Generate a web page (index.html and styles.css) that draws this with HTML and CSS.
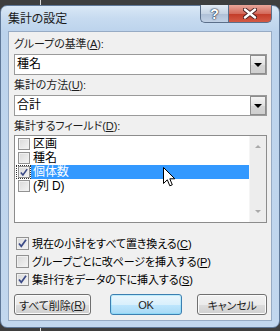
FILE: index.html
```html
<!DOCTYPE html>
<html lang="ja">

<head>
    <meta charset="UTF-8">
    <title>集計の設定</title>
    <link rel="stylesheet" href="styles.css">
</head>

<body>
    <div class="window">
        <div class="titlebar">
            <span class="title">集計の設定</span>
            <div class="caption-buttons">
                <span class="cap-btn help">?</span>
                <span class="cap-btn close">
                    <svg width="14" height="11" viewBox="0 0 14 11">
                        <path d="M2 1.5 L12 9.5 M12 1.5 L2 9.5" stroke="#4a2020" stroke-width="4.2" stroke-linecap="round" />
                        <path d="M2 1.5 L12 9.5 M12 1.5 L2 9.5" stroke="#fff" stroke-width="2.4" stroke-linecap="round" />
                    </svg>
                </span>
            </div>
        </div>

        <div class="client">
            <div class="label">グループの基準(<u>A</u>):</div>
            <div class="combo">
                <span class="combo-text">種名</span>
                <span class="combo-btn"><span class="arrow"></span></span>
            </div>

            <div class="label">集計の方法(<u>U</u>):</div>
            <div class="combo">
                <span class="combo-text">合計</span>
                <span class="combo-btn"><span class="arrow"></span></span>
            </div>

            <div class="label">集計するフィールド(<u>D</u>):</div>
            <div class="listbox">
                <div class="items">
                    <div class="item">
                        <span class="cb-wrap"><span class="cb"></span></span>
                        <span class="item-text">区画</span>
                    </div>
                    <div class="item">
                        <span class="cb-wrap"><span class="cb"></span></span>
                        <span class="item-text">種名</span>
                    </div>
                    <div class="item selected">
                        <span class="cb-wrap focus"><span class="cb checked">
                            <svg width="11" height="11" viewBox="0 0 11 11"><path d="M2 5.5 L4.3 8.3 L9 1.8" fill="none" stroke="#3b4a86" stroke-width="1.7" /></svg>
                        </span></span>
                        <span class="item-text">個体数</span>
                    </div>
                    <div class="item">
                        <span class="cb-wrap"><span class="cb"></span></span>
                        <span class="item-text">(列 D)</span>
                    </div>
                </div>
                <div class="scrollbar">
                    <span class="sb-arrow up"></span>
                    <span class="sb-arrow down"></span>
                </div>
                <svg class="cursor" width="14" height="22" viewBox="0 0 14 22">
                    <path d="M0.5 0.5 L0.5 16.5 L4.3 12.8 L6.8 18.8 L9.3 17.8 L6.8 11.8 L11.8 11.8 Z" fill="#fff" stroke="#000" stroke-width="1" stroke-linejoin="round" />
                </svg>
            </div>

            <div class="options">
                <div class="option">
                    <span class="cb checked">
                        <svg width="11" height="11" viewBox="0 0 11 11"><path d="M2 5.5 L4.3 8.3 L9 1.8" fill="none" stroke="#3b4a86" stroke-width="1.7" /></svg>
                    </span>
                    <span>現在の小計をすべて置き換える(<u>C</u>)</span>
                </div>
                <div class="option">
                    <span class="cb"></span>
                    <span>グループごとに改ページを挿入する(<u>P</u>)</span>
                </div>
                <div class="option">
                    <span class="cb checked">
                        <svg width="11" height="11" viewBox="0 0 11 11"><path d="M2 5.5 L4.3 8.3 L9 1.8" fill="none" stroke="#3b4a86" stroke-width="1.7" /></svg>
                    </span>
                    <span>集計行をデータの下に挿入する(<u>S</u>)</span>
                </div>
            </div>

            <div class="buttons">
                <span class="btn btn-clear">すべて削除(<u>R</u>)</span>
                <span class="btn btn-ok">OK</span>
                <span class="btn btn-cancel">キャンセル</span>
            </div>
        </div>
    </div>
</body>

</html>
```

FILE: styles.css
```css
body {
    margin: 0;
    padding-top: 5px;
    height: 331px;
    box-sizing: border-box;
    overflow: hidden;
    background-color: #3e3e3e;
    background-image: linear-gradient(90deg, transparent 40px, #d8d8d8 40px, #d8d8d8 41px, transparent 41px);
    font-family: "Liberation Sans", "Noto Sans CJK JP", sans-serif;
    font-size: 11px;
    font-feature-settings: "palt";
    letter-spacing: -0.1px;
    color: #000;
}

u {
    text-decoration: underline;
    text-underline-offset: 1px;
}

.window {
    width: 280px;
    height: 323px;
    box-sizing: border-box;
    border: 1px solid #5f7898;
    border-radius: 7px;
    background: linear-gradient(#dae8f6 0px, #c7dbf0 12px, #bcd3ec 26px, #c2d7ee 100%);
    padding: 0 7px 6px 7px;
    display: flex;
    flex-direction: column;
}

.titlebar {
    height: 25px;
    display: flex;
    justify-content: space-between;
    align-items: flex-start;
}

.title {
    font-family: "Noto Sans CJK JP", sans-serif;
    font-size: 12px;
    line-height: 12px;
    margin-top: 6px;
    color: #1a1a1a;
}

.caption-buttons {
    display: flex;
    margin-top: -1px;
}

.cap-btn {
    height: 18px;
    display: flex;
    align-items: center;
    justify-content: center;
    box-sizing: border-box;
    border: 1px solid #5b6f8a;
    border-top: none;
}

.help {
    width: 28px;
    border-right: none;
    border-radius: 0 0 0 5px;
    background: linear-gradient(#e2ebf5, #c6d4e4 50%, #aebfd6 51%, #c2d2e6);
    color: #fff;
    font-weight: bold;
    font-size: 14px;
    text-shadow: 0 0 1px #27344a, 0 0 1px #27344a, 0 0 2px #27344a;
}

.close {
    width: 44px;
    border-radius: 0 0 5px 0;
    background: linear-gradient(#e8a69a, #d46b5c 50%, #c23a27 51%, #d45a45);
}

.client {
    flex: 1;
    background: #f0f0f0;
    border: 1px solid #97abc4;
    padding: 5px 4px 0 5px;
    display: flex;
    flex-direction: column;
}

.label {
    height: 14px;
    line-height: 14px;
    margin-bottom: 3px;
    color: #1e1e1e;
}

.label + .listbox {
    margin-top: -1px;
}

.combo {
    height: 21px;
    box-sizing: border-box;
    border: 1px solid #9a9a9a;
    background: #fff;
    display: flex;
    justify-content: space-between;
    margin-bottom: 3px;
}

.combo-text {
    line-height: 19px;
    padding-left: 2px;
    font-size: 12px;
}

.combo-btn {
    width: 16px;
    box-sizing: border-box;
    border: 1px solid #8d8d8d;
    background: linear-gradient(#f4f4f4, #e2e2e2 50%, #d5d5d5 51%, #cfcfcf);
    display: flex;
    align-items: center;
    justify-content: center;
}

.arrow {
    width: 0;
    height: 0;
    border-left: 4px solid transparent;
    border-right: 4px solid transparent;
    border-top: 4px solid #000;
}

.listbox {
    position: relative;
    height: 88px;
    box-sizing: border-box;
    border: 1px solid #8c8c8c;
    background: #fff;
    display: flex;
}

.items {
    flex: 1;
    padding-top: 1px;
}

.item {
    height: 14px;
    display: flex;
    align-items: center;
}

.cb-wrap {
    width: 15px;
    height: 14px;
    margin-left: 1px;
    display: flex;
    align-items: center;
    justify-content: center;
    box-sizing: border-box;
}

.cb-wrap.focus {
    border: 1px dotted #333;
}

.item-text {
    flex: 1;
    height: 14px;
    line-height: 14px;
    padding-left: 2px;
    font-size: 12px;
}

.item.selected .item-text {
    background: #3399ff;
    color: #fff;
}

.cb {
    width: 13px;
    height: 13px;
    box-sizing: border-box;
    border: 1px solid #929292;
    background: linear-gradient(135deg, #d9d9d9, #f4f4f4);
    box-shadow: inset 0 0 0 1px #f0f0f0;
    display: flex;
    align-items: center;
    justify-content: center;
    flex-shrink: 0;
}

.item .cb {
    width: 12px;
    height: 12px;
}

.scrollbar {
    width: 16px;
    background: #ededed;
    border-left: 1px solid #f5f5f5;
    position: relative;
}

.sb-arrow {
    position: absolute;
    left: 5px;
    width: 0;
    height: 0;
    border-left: 3px solid transparent;
    border-right: 3px solid transparent;
}

.sb-arrow.up {
    top: 9px;
    border-bottom: 3px solid #a9a9a9;
}

.sb-arrow.down {
    bottom: 9px;
    border-top: 3px solid #a9a9a9;
}

.cursor {
    position: absolute;
    left: 148px;
    top: 31px;
}

.options {
    margin-top: 11px;
}

.option {
    height: 18px;
    display: flex;
    align-items: center;
    gap: 3px;
    padding-left: 2px;
}

.buttons {
    display: flex;
    margin-top: 6px;
}

.btn {
    height: 21px;
    box-sizing: border-box;
    border: 1px solid #707070;
    border-radius: 3px;
    background: linear-gradient(#f2f2f2, #ebebeb 50%, #dddddd 51%, #cfcfcf);
    box-shadow: inset 0 0 0 1px #fbfbfb;
    display: flex;
    align-items: center;
    justify-content: center;
    color: #1e1e1e;
}

.btn-clear {
    width: 77px;
}

.btn-ok {
    width: 73px;
    margin-left: 19px;
    border-color: #3c7fb1;
    background: linear-gradient(#eaf6fd, #d9f0fc 50%, #bee6fd 51%, #a7d9f5);
    box-shadow: inset 0 0 0 1px #48d5fb44;
}

.btn-cancel {
    width: 70px;
    margin-left: 15px;
}
```
